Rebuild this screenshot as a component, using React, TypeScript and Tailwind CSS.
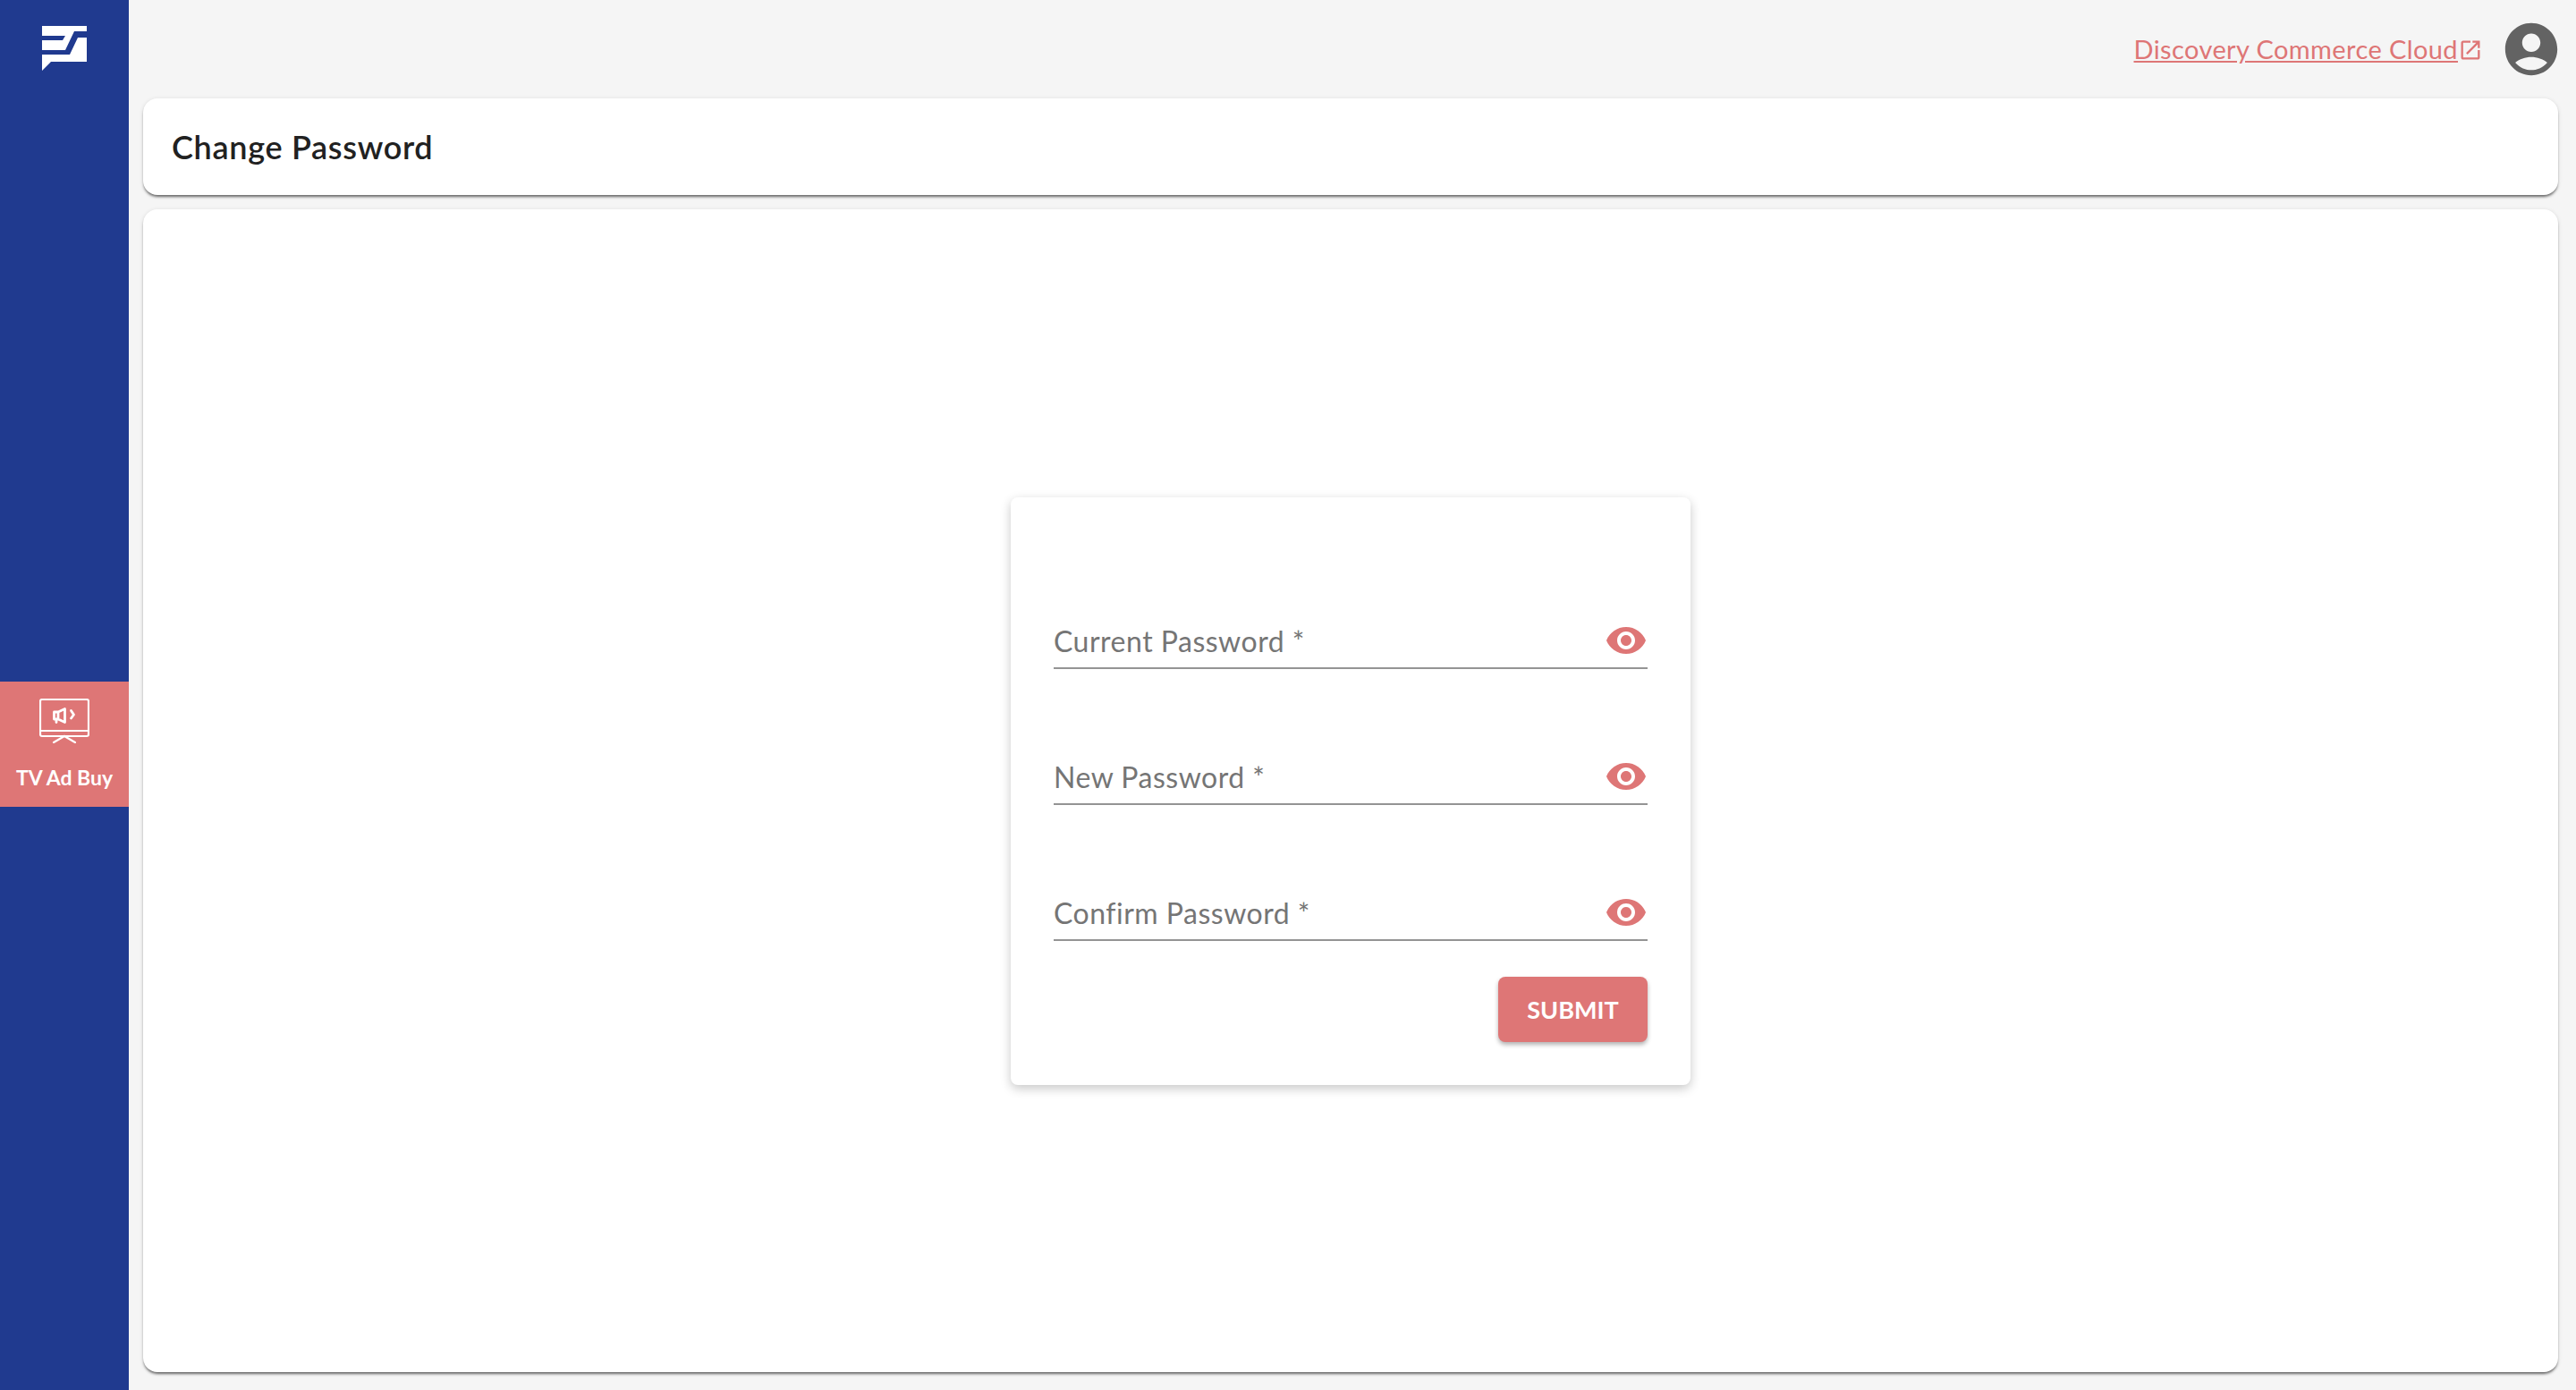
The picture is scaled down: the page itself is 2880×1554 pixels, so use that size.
import React from 'react';

const FONT = "font-['Lato','Liberation_Sans',sans-serif]";

const EyeIcon = () => (
  <svg viewBox="0 0 24 24" className="mt-[2px] w-[48px] h-[48px] fill-[#de7676]">
    <path d="M12 4.5C7 4.5 2.73 7.61 1 12c1.73 4.39 6 7.5 11 7.5s9.27-3.11 11-7.5c-1.73-4.39-6-7.5-11-7.5zM12 17c-2.76 0-5-2.24-5-5s2.24-5 5-5 5 2.24 5 5-2.24 5-5 5zm0-8c-1.66 0-3 1.34-3 3s1.34 3 3 3 3-1.34 3-3-1.34-3-3-3z" />
  </svg>
);

const Logo = () => (
  <svg viewBox="0 0 50 50" className="w-[50px] h-[50px]">
    <path fill="#ffffff" d="M0 0H50V40H10L0 50Z" />
    <path fill="#203a8f" d="M0 11H26L23 16H0Z" />
    <path fill="#203a8f" d="M36 6H50V13H40L31 32H0V27H26Z" />
  </svg>
);

const TvIcon = () => (
  <svg viewBox="0 0 56 50" className="w-[56px] h-[50px]" fill="none" stroke="#ffffff" strokeWidth="2.2" strokeLinecap="round" strokeLinejoin="round">
    <rect x="1" y="1" width="54" height="41" rx="2" />
    <path d="M1 36H55" />
    <path d="M28 42L16 49M28 42L40 49" />
    <path strokeWidth="2.8" d="M16.5 15H21V23H16.5ZM21 15L28.5 11.5V26.5L21 23M19 23V26.5" />
    <path strokeWidth="2.8" d="M35.5 13.5L38.5 18L35.5 22" />
  </svg>
);

const Field = ({ label }: { label: string }) => (
  <div className="h-[64px] flex items-center justify-between border-b-2 border-[#949494]">
    <span className="text-[32px] leading-none text-[#757575] tracking-[0.5px] pt-[4px]">{label}</span>
    <EyeIcon />
  </div>
);

export default function App() {
  return (
    <div className={`flex h-[1554px] bg-[#f5f5f5] ${FONT}`}>
      <aside className="w-[144px] shrink-0 bg-[#203a8f] flex flex-col">
        <div className="pt-[29px] pl-[47px]">
          <Logo />
        </div>
        <div className="mt-[683px] h-[140px] bg-[#de7676] flex flex-col items-center pt-[19px]">
          <TvIcon />
          <span className="mt-[24px] text-[23px] leading-[28px] font-bold text-white">TV Ad Buy</span>
        </div>
      </aside>

      <main className="flex-1 flex flex-col pl-[16px] pr-[20px] pb-[20px]">
        <div className="h-[110px] shrink-0 flex items-center justify-end">
          <a className="flex items-center text-[29px] tracking-[0.4px] text-[#de7676] underline">
            Discovery Commerce Cloud
            <svg viewBox="0 0 24 24" className="mt-[2px] w-[28px] h-[28px] fill-[#de7676]">
              <path d="M19 19H5V5h7V3H5c-1.11 0-2 .9-2 2v14c0 1.1.89 2 2 2h14c1.1 0 2-.9 2-2v-7h-2v7zM14 3v2h3.59l-9.83 9.83 1.41 1.41L19 6.41V10h2V3h-7z" />
            </svg>
          </a>
          <svg viewBox="0 0 24 24" className="ml-[19px] mr-[-5px] w-[70px] h-[70px] fill-[#636363]">
            <path d="M12 2C6.48 2 2 6.48 2 12s4.48 10 10 10 10-4.48 10-10S17.52 2 12 2zm0 4c1.93 0 3.5 1.57 3.5 3.5S13.93 13 12 13s-3.5-1.57-3.5-3.5S10.07 6 12 6zm0 14c-2.03 0-4.43-.82-6.14-2.88C7.55 15.8 9.68 15 12 15s4.45.8 6.14 2.12C16.43 19.18 14.03 20 12 20z" />
          </svg>
        </div>

        <div className="h-[108px] shrink-0 bg-white rounded-[16px] shadow-[0_3px_3px_-1px_rgba(0,0,0,0.55),0_1px_5px_rgba(0,0,0,0.12)] flex items-center px-[32px]">
          <h1 className="text-[36px] font-semibold tracking-[0.7px] text-[#212121]">Change Password</h1>
        </div>

        <div className="mt-[16px] flex-1 bg-white rounded-[16px] shadow-[0_3px_3px_-1px_rgba(0,0,0,0.55),0_1px_5px_rgba(0,0,0,0.12)] flex items-center justify-center">
          <div className="w-[760px] h-[657px] bg-white rounded-[8px] shadow-[0_4px_12px_rgba(0,0,0,0.22)] px-[48px] pt-[128px] flex flex-col gap-[88px]">
            <Field label="Current Password *" />
            <Field label="New Password *" />
            <div>
              <Field label="Confirm Password *" />
              <div className="mt-[40px] flex justify-end">
                <button className="w-[167px] h-[73px] pt-[2px] bg-[#de7676] rounded-[8px] text-white text-[27px] font-bold shadow-[0_3px_5px_rgba(0,0,0,0.3)]">
                  SUBMIT
                </button>
              </div>
            </div>
          </div>
        </div>
      </main>
    </div>
  );
}
